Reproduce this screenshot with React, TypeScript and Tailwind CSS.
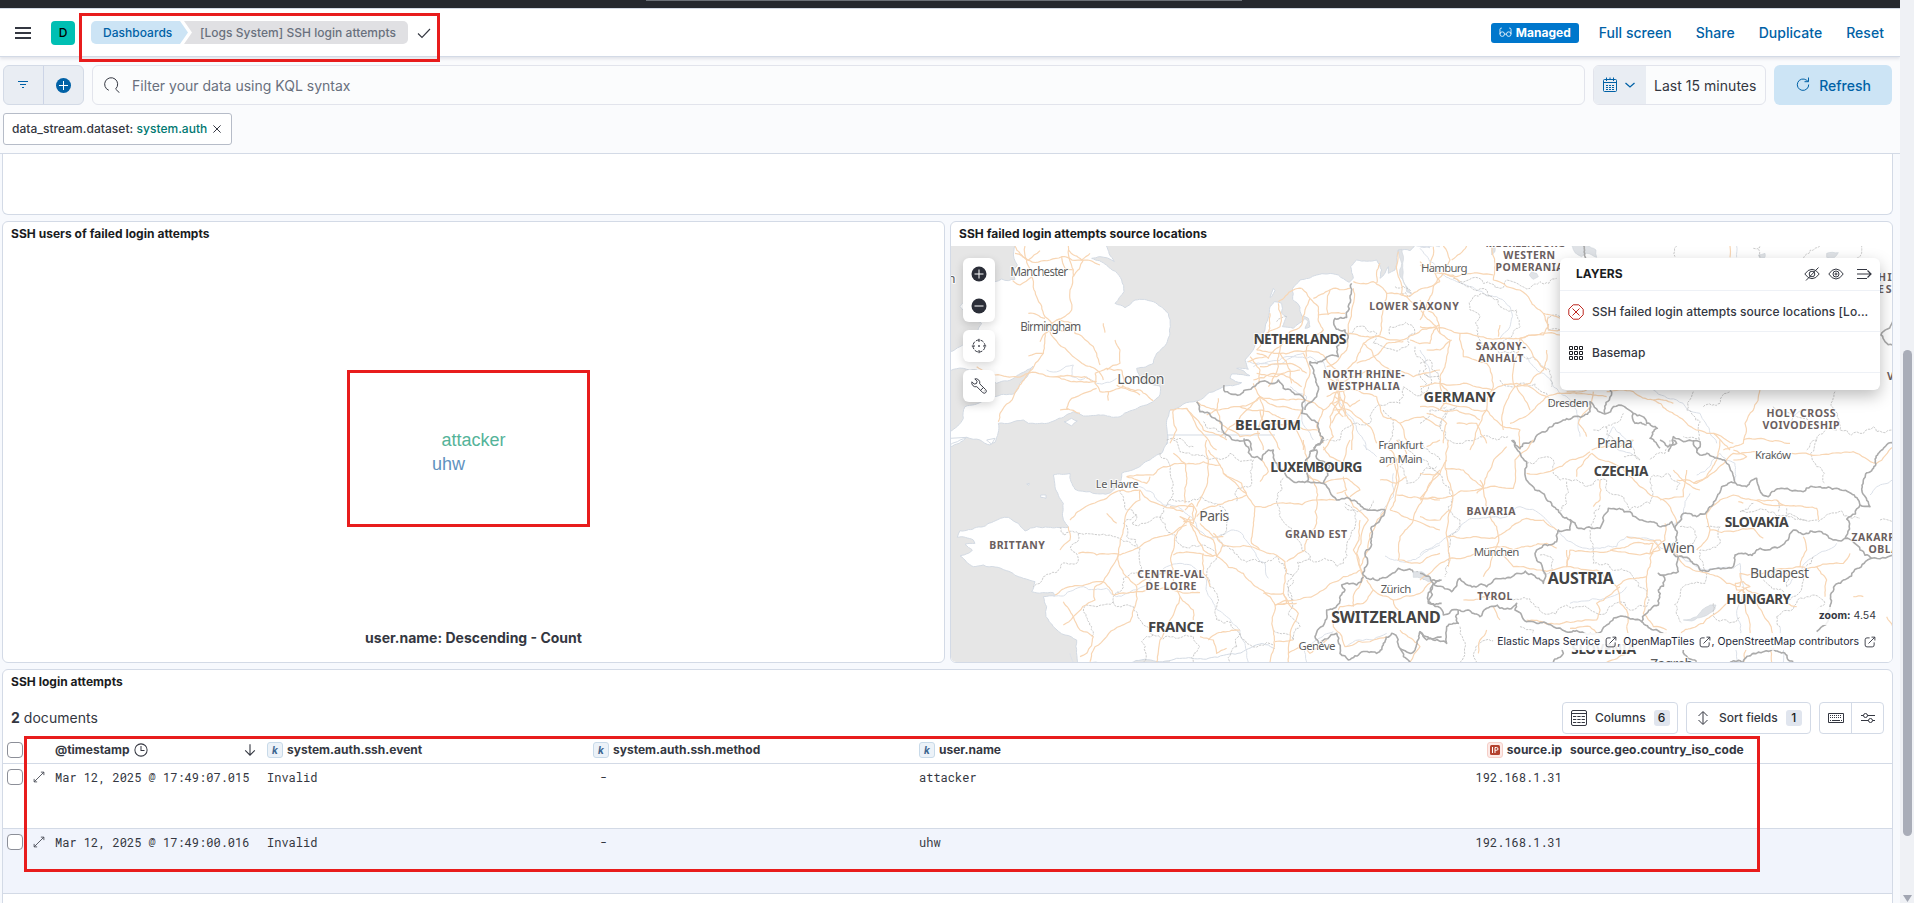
import React from "react";

const INTER = "font-['Inter',sans-serif]";
const MONO = "font-['Roboto_Mono','Liberation_Mono',monospace]";

/* ---------- map geometry ---------- */

type Pt = [number, number];

const parse = (s: string): Pt[] => s.split(" ").map((p) => p.split(",").map(Number) as Pt);

function noise(x: number, y: number) {
  const v = Math.sin(x * 12.9898 + y * 78.233) * 43758.5453;
  return (v - Math.floor(v)) * 2 - 1;
}

function rough(s: string, k: number, min = 12): string {
  const pts = parse(s);
  const out: Pt[] = [pts[0]];
  const split = (a: Pt, b: Pt) => {
    const dx = b[0] - a[0];
    const dy = b[1] - a[1];
    const len = Math.hypot(dx, dy);
    if (len < min) {
      out.push(b);
      return;
    }
    const n = noise(a[0] + b[0], a[1] + b[1]) * k;
    const m: Pt = [(a[0] + b[0]) / 2 - dy * n, (a[1] + b[1]) / 2 + dx * n];
    split(a, m);
    split(m, b);
  };
  for (let i = 1; i < pts.length; i++) split(pts[i - 1], pts[i]);
  return "M" + out.map((p) => p[0].toFixed(1) + " " + p[1].toFixed(1)).join("L");
}

type Sheet = { x: number; y: number; land?: string[]; water?: string[]; roads: string[]; rivers: string[]; regions: string[]; borders: string[] };

const SHEETS: Sheet[] = [
  {
    x: 940,
    y: 210,
    land: [
      "225,105 222,145 232,165 218,190 225,208 205,212 185,207 165,215 150,235 100,260 60,290 80,310 125,340 110,370 60,410 30,425 30,483 70,475 110,480 150,510 170,520 230,497 280,468 262,500 240,520 225,550 190,553 165,560 130,572 75,590 70,625 30,665 30,710 80,682 120,690 150,705 165,697 175,640 250,630 265,640 320,640 370,622 400,605 430,618 490,615 540,620 600,590 640,575 657,560 660,528 640,525 600,515 590,475 640,460 650,430 680,400 691,350 685,310 640,275 585,270 555,293 525,280 552,245 545,210 500,165 455,145 480,140 523,155 498,105",
      "372,635 395,625 412,633 395,648",
      "668,725 685,690 680,650 690,600 770,573 850,530 905,518 870,505 875,492 930,497 890,475 925,478 915,450 950,400 975,360 990,290 1003,275 1025,280 1025,310 1040,320 1027,350 1060,355 1095,325 1105,335 1095,355 1110,350 1105,325 1085,318 1080,292 1058,268 1058,235 1080,210 1130,195 1195,195 1228,217 1240,205 1232,170 1250,150 1310,150 1325,180 1320,205 1345,170 1345,190 1365,180 1375,120 1410,122 1425,106 1520,106 1520,725",
      "1000,235 1005,242 995,260 990,262",
    ],
    water: ["1375,120 1385,160 1380,200 1400,245 1412,250 1390,215 1388,160 1385,118"],
    roads: [
      "225,108 260,150 275,200 290,260 315,320 340,345", "385,108 400,180 390,240 395,300 350,330 315,360", "260,150 330,150 365,140 430,150 480,165",
      "265,150 300,122", "225,130 265,150", "365,140 375,175 400,180", "430,150 400,200", "255,108 260,150", "385,120 425,150 450,130", "330,365 390,430 470,480 490,510",
      "315,370 310,430 265,490 200,500 165,495", "310,430 265,438", "265,490 230,540 180,610 175,635", "265,490 350,500 470,515",
      "350,330 395,340 405,370 470,430 480,465", "490,340 495,368", "525,390 540,420 540,460 500,480", "465,490 500,475 545,480 548,530 510,545 480,545 465,520 465,490",
      "545,530 600,540 640,572", "505,545 505,572", "470,535 395,565 380,595 420,610", "530,525 600,555", "265,310 315,325", "275,200 240,225 218,212", "360,600 385,598",
      "300,395 315,370 340,360 375,365", "460,515 435,500 350,500", "110,470 135,490 165,495",
      "1015,275 1060,240 1085,235", "1085,235 1110,265 1135,290 1135,315 1150,360 1100,410", "1120,265 1180,235 1230,235", "1170,240 1165,315",
      "1135,315 1215,310", "1110,265 1095,300 1085,345", "1085,345 1050,365 1020,420", "1015,280 1020,350 980,370", "990,310 985,370 950,420",
      "950,420 1020,430 1090,425 1150,435", "930,440 960,480 955,520", "1020,420 1015,470 985,530", "960,470 1050,460 1100,490",
      "950,490 1010,500 1080,480", "1090,430 1110,480 1090,560", "1150,435 1190,480 1200,560 1215,620", "1020,430 1050,480 1055,520", "950,430 985,445 1030,400",
      "940,510 1000,490 1040,500 1085,530", "925,455 980,440", "1100,410 1100,440", "690,600 740,595 790,660 860,690", "770,575 830,600 900,590 960,560 1040,570 1095,570",
      "830,600 840,640 900,680 960,670", "960,560 955,680 970,720", "960,600 1000,680 1020,720", "900,590 960,600 1060,640 1090,720",
      "835,565 830,600 800,615", "960,560 920,600 870,650 840,680", "940,520 960,560 1010,590 1085,600", "1085,600 1060,640 1000,640 955,650",
      "1095,570 1150,600 1200,570", "1150,600 1130,650 1150,700", "700,600 710,660 690,700", "740,595 770,650 830,720", "1060,640 1100,660 1140,660",
      "1240,235 1235,300 1225,370 1220,420 1160,470", "1240,215 1300,215 1340,250 1400,260", "1375,125 1375,200 1385,250 1400,260 1500,215",
      "1340,250 1325,320 1320,375 1270,400 1250,450 1215,500", "1220,370 1320,380 1400,385 1500,345", "1400,260 1450,310 1490,350 1470,400 1410,390", "1270,400 1310,450 1350,480 1420,500 1500,480",
      "1150,500 1190,520 1200,590 1250,620", "1160,560 1200,545 1250,540 1310,560", "1190,520 1240,500 1290,480", "1180,600 1210,600 1240,650 1235,720", "1310,560 1330,620 1380,640 1420,720",
      "1200,560 1170,620 1180,680 1150,720", "1250,620 1290,650 1310,700", "1185,560 1230,590 1260,570", "1200,530 1215,560 1200,600 1175,640", "1190,545 1175,580 1210,620",
      "1250,460 1300,440 1340,400 1390,395", "1310,220 1320,160", "1440,270 1480,310 1500,370", "1480,110 1470,160 1500,215", "1380,640 1450,620 1500,650",
    ],
    rivers: ["320,480 360,482 400,465 395,500 420,510 440,500 470,520 530,505", "920,455 990,465 1050,445 1110,440 1150,455 1190,510 1200,580 1250,660 1280,720", "940,470 985,455 1050,440 1090,430", "1500,110 1440,110", "1050,530 1100,560 1085,610 1120,690"],
    regions: [
      "1220,375 1275,350 1310,370 1300,400 1340,415 1400,410 1425,370 1415,345 1380,345 1350,350 1350,375", "1425,410 1430,440 1455,460 1450,490 1475,510 1460,545 1390,530 1380,580 1300,600 1290,640 1230,650 1200,690 1150,690",
      "1365,230 1410,240 1410,260 1380,250", "1330,600 1360,650 1340,700", "1455,490 1500,500", "680,690 720,685 760,710", "790,635 840,665 860,690", "1040,320 1010,335",
    ],
    borders: [
      "1235,220 1232,270 1220,322 1185,325 1185,350 1215,360 1220,395 1190,410 1195,440 1150,450 1110,455 1120,490 1135,530 1130,560 1105,580 1095,600",
      "852,525 855,545 905,550 940,530 960,515 1015,510 1030,535 1055,545 1095,570 1085,610 1110,625 1135,640 1150,685 1120,715",
      "770,575 780,605 830,630 850,665 880,690 930,695 935,722",
    ],
  },
  {
    x: 1420,
    y: 210,
    water: ["455,106 465,128 485,140 500,130 530,142 528,120 500,106", "335,185 350,190 355,200 340,208 328,195", "1220,130 1255,128 1240,145 1220,142", "1015,135 1035,130 1035,142 1020,145", "215,106 225,110 225,125 215,135"],
    roads: [
      "0,165 60,190 110,200 180,190 220,195", "70,190 90,150 70,108", "95,150 140,108", "0,155 30,180 70,190", "70,190 40,230 20,290 0,330", "215,110 225,160 220,210 260,230 300,240 330,270 370,310 420,325",
      "70,190 120,215", "0,350 50,355 120,370 200,385 300,385 350,375 420,375", "370,310 385,350 370,375 300,385 290,440 285,530 250,600 250,660", "50,355 90,390 80,440 60,500 60,520 0,530",
      "60,520 140,520 220,540 290,520 350,545 380,560", "120,370 130,440 200,460 220,530 200,600 180,640 150,720", "60,520 70,580 130,590 200,600 250,650", "250,650 300,660 300,720",
      "0,590 60,600 110,600 180,630", "300,385 340,440 380,480", "285,530 330,520 370,480 380,420", "380,560 450,550 560,560", "380,560 340,600 270,640", "95,390 60,420 20,420",
      "240,345 235,380", "385,320 385,360 420,360", "520,545 510,590 475,640 500,680", "560,545 640,545 700,570 760,580", "700,570 740,600 800,640 860,670 940,700", "1020,540 1000,600 975,640 970,700 910,720",
      "970,690 1040,690 1110,700", "930,108 930,142", "880,670 910,700 930,720", "440,545 500,540", "20,610 80,640 70,700", "110,640 170,640 200,700", "330,600 310,560 290,530", "60,600 90,560 60,520",
    ],
    rivers: ["0,115 60,190 110,215 170,240 230,260 270,290 270,350 240,385", "320,440 370,490 400,530 440,560 470,600 480,680", "700,540 770,570 840,610 870,670 890,700", "950,108 950,142", "540,710 580,650 620,690", "1150,600 1110,640", "0,420 30,500"],
    regions: [
      "0,460 30,450 55,490 60,520", "100,205 140,230 215,260 240,290 290,300 300,350 265,385 240,410 200,415 170,360 180,320 150,300 160,260 215,260", "120,215 190,220 240,235 260,210 330,235 360,215 410,205",
      "60,650 75,600 110,590 60,650 80,690 120,700 180,680 230,690 265,680", "770,108 765,140", "1000,115 1020,110 1020,142", "1150,145 1200,108", "1310,145 1325,108", "200,415 240,430 300,440 340,440 390,480 395,530", "240,510 300,520 380,550 390,590",
      "820,545 800,600 840,690 790,680", "1060,590 1110,610 1200,640 1250,660", "1245,545 1240,600 1260,660 1330,670 1360,650 1418,660", "0,640 30,600 80,590", "380,330 420,320 420,360 385,360 380,330", "1250,660 1190,690 1160,720", "850,590 900,580 930,545",
      "560,650 580,690 640,690", "0,480 20,520 0,560", "520,660 580,640 610,610",
    ],
    borders: [
      "275,690 300,715 310,700 360,670 430,630 510,605 510,575 555,612 580,590 640,610 680,640 712,655 690,685 720,715", "570,540 568,570 555,612", "745,725 760,680 790,695 840,695 830,722", "1418,335 1383,375 1395,395 1418,405", "490,106 497,145", "640,610 645,640 680,645",
    ],
  },
  {
    x: 940,
    y: 440,
    land: [
      "30,-5 30,15 60,0 80,-8", "140,0 155,12 165,-5",
      "683,-15 683,10 665,40 610,70 545,100 540,130 512,158 450,155 405,148 393,125 390,100 365,103 340,105 345,140 370,190 370,240 385,262 350,262 325,262 290,260 255,273 235,250 205,232 160,245 110,262 60,272 52,292 100,300 105,310 75,313 97,330 85,340 60,348 100,380 130,375 200,392 250,415 285,425 275,455 340,458 345,468 310,470 320,500 318,530 340,560 375,585 410,600 415,675 1520,675 1520,-15",
      "302,165 318,165 318,175 302,172", "260,132 268,130 266,136",
    ],
    roads: [
      "700,40 735,70 740,130 735,190", "800,0 805,70 790,160 770,200", "560,110 640,105 670,80 740,72 840,75 850,100 920,160", "805,30 840,75", "545,150 600,150 650,190 730,215", "560,110 620,130 630,110",
      "390,240 430,205 500,175 550,150", "600,150 600,180 565,210 545,290 535,345 490,425", "500,220 530,250", "385,260 390,300 360,330", "415,340 470,345 540,345 600,320 660,290 740,255", "535,345 550,400 580,430",
      "750,230 705,290 700,420 720,470 690,540 660,600 650,667", "750,250 820,300 830,350 910,400 990,470 1005,495 1000,570 990,667", "770,230 810,200 860,185 920,165 945,200 935,310 960,330 1035,365 1040,390 1030,460 1075,520 1050,600 1045,667",
      "945,200 1040,190 1130,180 1190,180", "920,165 905,130 850,100", "1130,180 1130,250 1100,300 1095,330 1040,365", "1130,180 1120,120 1100,100 1095,40 1090,0", "1215,155 1240,200 1285,240 1265,280 1250,340 1260,380", "1260,390 1210,410 1150,450 1070,480 1005,495",
      "700,345 780,340 830,345", "830,350 850,315 930,320 960,330", "345,465 390,440 450,430 490,425 520,465 600,455 720,455 780,458", "490,425 465,440 465,480 400,530 370,555", "370,485 400,530 420,570 460,590 440,640 420,650",
      "580,430 590,440 580,510 570,545 500,590 465,620 450,665", "590,435 640,410 700,390", "720,470 760,510 760,540", "780,590 820,600 830,640 860,625", "805,600 850,575 900,570", "690,200 760,200 760,240 720,230 740,250", "735,210 755,190 770,215 760,250 730,245",
      "1100,110 1150,130 1220,115 1260,150 1230,170", "1210,110 1220,150 1190,160", "1005,495 1070,490", "1005,605 1060,600", "1045,640 1090,620 1110,640 1160,600", "970,460 1030,460 1040,490 1005,495", "960,125 985,95 965,60",
      "1360,60 1370,130 1340,200 1290,280 1260,380 1270,410 1240,500", "1150,20 1170,50 1210,70 1230,0", "1340,20 1370,60 1370,150 1350,210", "1370,165 1440,175 1500,180", "1350,210 1420,240 1500,270", "1420,240 1380,290 1375,360 1440,370 1500,340", "1440,175 1480,110 1500,90", "1420,240 1450,170 1500,100",
      "1280,420 1300,450 1360,480 1440,460 1480,420", "1300,450 1270,490 1200,500 1180,560 1200,580", "1200,580 1215,620 1300,600 1340,590", "1360,480 1380,520 1340,540", "1380,570 1420,600 1440,620 1410,667", "1260,240 1240,330 1270,400", "780,250 820,290 850,290",
      "820,350 790,330 760,270 750,240", "850,315 830,290 820,280", "790,340 790,400 810,440", "1370,0 1400,40 1370,60 1340,80", "1320,120 1370,130 1400,110",
    ],
    rivers: ["545,135 600,140 640,160 670,195 720,205 760,240 800,290 830,290 880,270 905,280 940,330 975,370 985,415", "340,468 370,468 430,440 500,445 530,470 580,450 620,435 680,380 720,370 770,390 800,420 820,490 860,530 900,570 915,610 925,667", "1360,100 1360,170 1320,240", "1500,315 1440,350 1380,365 1335,348", "1270,15 1310,50", "1100,667 1095,620 1130,600 1180,575", "1220,620 1300,600 1340,580", "390,640 400,667"],
    regions: [
      "700,0 720,35 790,45 870,40 940,60", "660,40 690,90 690,180 740,185 830,190 860,220 860,270 840,290", "690,180 670,205 675,250 710,290 715,310 770,320 820,330 830,350 810,380 810,440 825,510 830,540 900,580 890,620", "940,60 935,130 885,160 890,185", "540,150 560,210 590,225 575,250 615,250 640,235 670,235", "360,262 370,285 415,280 480,285 520,290 545,300 600,325 605,380 590,400",
      "415,280 410,370 355,390 310,410 300,430 280,440", "590,225 550,250 560,290 600,325", "605,400 550,415 545,450 520,470 530,500 580,500 600,540 640,585 700,590 760,590 780,620 760,667", "640,585 605,605 610,667", "520,485 440,495 430,510 455,560 455,590", "1030,115 1010,180 1020,230 1060,280 1085,330 1110,360 1190,380 1210,370 1220,320 1245,260 1240,210 1215,190",
      "830,290 880,330 905,360 960,365 1010,350 1040,400 1060,405 1110,350", "1060,405 1055,480 1045,520 1080,560 1060,600 1000,570", "900,580 920,610 1000,615", "1215,200 1290,205 1300,180", "1375,0 1440,60 1380,80 1400,130 1440,110 1490,80", "890,620 870,667", "1060,480 1045,450 1060,420", "1500,60 1450,20 1440,0",
    ],
    borders: [
      "912,-5 935,50 965,60 985,30 1000,30 1003,60 1035,100 1060,125 1105,125 1150,130 1190,180 1250,185 1335,210 1295,260 1275,340 1268,400 1280,415 1350,405 1375,385 1440,400 1505,420", "1150,0 1110,35 1095,70 1100,125", "1110,35 1130,30 1130,55 1170,80 1150,130",
      "1270,410 1250,435 1205,435 1215,450 1160,510 1155,545 1125,590 1135,610 1190,580 1200,640 1225,660 1310,640 1330,610 1355,580 1380,625 1410,640 1440,575 1460,600 1505,590", "1500,420 1475,440 1465,485 1505,490", "1380,625 1410,667",
    ],
  },
  {
    x: 1420,
    y: 440,
    water: ["790,540 830,530 870,495 888,495 885,508 850,530 815,543", "-20,395 5,395 35,420 25,425 -20,412"],
    roads: [
      "85,0 75,80 90,130 95,200 80,290 90,360 85,380", "75,85 130,90 190,145 200,210 230,260 230,320", "190,145 280,145 285,60 320,30 340,0", "0,180 60,175 190,145 210,90 260,20", "80,290 160,290 225,295 320,235 370,240 410,270", "230,320 330,320 380,310 410,325",
      "230,320 140,350 90,355 30,400 0,420", "230,320 210,380 190,410", "230,330 280,380 360,390 440,380 450,330 520,335 600,325 700,310", "320,100 400,90 450,60 510,35", "515,40 545,60 620,100 660,140 730,180 770,250", "515,40 470,90 470,110", "540,120 540,180 520,200",
      "515,30 600,20 640,0", "720,180 790,170 800,90", "735,250 735,300 700,330 690,380 680,440 670,520 700,560 740,570", "620,290 680,300 720,300 770,340 800,380 880,405 920,430 960,440", "700,340 660,345 570,330", "440,330 440,380 530,390 590,440 680,410", "590,440 600,490 620,510 620,560",
      "830,330 870,270 860,220 900,180 940,165 1000,180 1090,195 1190,205 1195,240", "770,120 830,130 890,90 940,40 1010,35", "1115,40 1200,45 1300,35 1370,70 1420,20", "940,30 980,50 940,60", "820,130 860,110 890,60 900,0", "870,270 940,275 1000,265 1030,295", "960,440 960,400 1050,390 1140,380 1190,380 1220,420 1215,470",
      "1140,380 1160,330 1150,290", "1190,380 1270,370 1290,340", "965,450 1010,490 1040,540 1060,600 1055,667", "965,450 900,510 850,550 750,600", "965,440 1010,460 1070,490 1130,500", "970,450 990,560 970,667", "320,540 440,545 530,540 540,510 530,490 600,440", "200,570 180,600 175,640", "620,560 620,640 560,667",
      "0,100 60,100 80,60", "20,20 60,0", "1400,530 1418,560", "700,300 720,330 690,340 700,310", "945,430 950,450 990,440 970,425 945,430", "130,480 190,470 280,480", "450,565 510,560 620,630 740,580", "1300,470 1330,470", "1090,195 1070,180 1010,180", "955,185 970,190", "220,500 240,540",
      "760,90 800,130 840,150", "180,120 190,145 170,160", "0,230 60,240 90,210",
    ],
    rivers: ["0,345 40,320 80,290 130,250 240,235 300,200 370,230 410,270 460,310 540,325 590,320 620,290 700,300 780,350 850,390 940,385 960,370 970,460 950,520 955,667", "450,490 540,480 620,440", "1350,165 1370,140 1418,120", "1100,440 1140,400 1180,350 1250,310", "560,10 640,45", "760,260 810,160", "830,105 900,40 945,70 945,120", "1080,560 1090,667"],
    regions: [
      "0,60 40,90 90,150 85,200 120,240 110,270 80,290", "85,290 85,360 75,410", "450,120 540,120 560,120 570,160 630,210 690,190 700,105 750,105", "440,125 440,190 420,215", "320,70 380,50 400,60 400,100 450,120", "750,105 780,130 770,150", "510,270 520,370 590,390 640,410 680,460 680,500", "280,480 340,490 480,500 530,520 640,510 680,500",
      "780,260 810,260 830,290 800,330", "860,260 900,260 900,310 840,330 850,380 855,430 790,440 785,550", "1000,190 960,215 1000,215 1060,215 1110,220 1150,240 1210,235 1320,235", "1100,205 1100,230 1160,240", "880,490 890,540 960,530", "1070,530 1130,490 1160,470 1215,490 1190,510", "1190,0 1190,80 1215,130", "1030,420 1100,480 1180,350", "540,195 520,240 515,270",
      "360,345 400,360 400,390 370,400", "240,580 180,610 170,667", "120,560 130,600 120,667", "300,560 340,570 360,610", "640,0 660,60 610,50", "1380,240 1418,245", "1070,180 1075,215", "750,0 735,40 690,60", "1100,440 1100,400 1040,410", "1070,530 1080,560",
    ],
    borders: [
      "0,400 40,430 25,490 70,525 115,510 180,530 210,500 290,490 285,510 320,545 400,560 480,577 530,580 560,555 665,545 680,520 715,495 715,450 735,420 715,400 775,395 775,350",
      "40,430 95,455 120,415 200,440 250,415 290,400 340,405 370,430 375,400 345,340 410,305 415,270 450,270 450,240 415,210 345,150 315,95 320,65 285,20 280,0",
      "450,238 475,265 540,265 565,205 630,215 680,245 755,245 765,265 770,300 755,330 775,350", "765,265 785,225 830,230 870,200 905,140 945,128 920,70 880,50 840,45 820,0",
      "945,128 980,140 1010,115 1045,170 1085,145 1150,155 1200,140 1250,145 1320,195 1350,200 1330,120 1420,10", "775,350 840,390 940,380 945,345 1020,325 1080,320 1120,270 1190,275 1240,300 1275,295 1320,195",
      "1275,295 1320,330 1355,355 1270,420 1230,500 1190,575", "1355,355 1420,345", "115,510 115,550 80,560 80,610 40,600 0,575", "665,545 700,570 730,580", "790,630 830,665", "930,667 1000,640 1060,625 1120,665", "400,667 430,640 425,625", "720,0 745,20 770,10 760,0",
    ],
  },
];

type Label = [string, number, number, number, number, "city" | "country" | "region"];

const LABELS: Label[] = [
  ["Manchester", 1039.3, 275.6, 58, 12, "city"], ["n", 951.5, 282.7, 7, 13, "city"], ["Birmingham", 1050.7, 330.8, 61, 12, "city"], ["London", 1140.8, 383.7, 47, 14, "city"],
  ["NETHERLANDS", 1300, 343.8, 93, 14, "country"], ["LOWER SAXONY", 1414, 310.3, 89.5, 10.5, "region"], ["NORTH RHINE-", 1363.7, 377.7, 82, 10.5, "region"], ["WESTPHALIA", 1363.8, 390, 72, 10.5, "region"],
  ["BELGIUM", 1268, 429.5, 66, 14.5, "country"], ["Frankfurt", 1400.8, 449.2, 45, 11.5, "city"], ["am Main", 1400.8, 462.6, 43.5, 11.5, "city"], ["Hamburg", 1444.3, 272, 46.7, 11.5, "city"],
  ["MECKLENBURG-", 1527, 246.8, 83, 10.5, "region"], ["WESTERN", 1529.2, 258.7, 51.7, 10.5, "region"], ["POMERANIA", 1529.5, 270.8, 68, 10.5, "region"], ["GERMANY", 1459.5, 402.2, 72, 14.5, "country"],
  ["SAXONY-", 1500.8, 349.8, 50, 10.5, "region"], ["ANHALT", 1500.8, 361.8, 45, 10.5, "region"], ["Dresden", 1568, 407.3, 41, 11.5, "city"], ["Praha", 1614.8, 447.5, 35.7, 14, "city"],
  ["HOLY CROSS", 1801, 416.7, 69, 10.5, "region"], ["VOIVODESHIP", 1801, 428.7, 77, 10.5, "region"], ["HIAN", 1894, 281, 32, 10.5, "region"], ["ESHIP", 1897, 293, 38, 10.5, "region"], ["VO", 1896, 380, 18, 10.5, "region"],
  ["Le Havre", 1117.3, 487.5, 43, 11, "city"], ["LUXEMBOURG", 1316.3, 472, 92, 14, "country"], ["Paris", 1214.3, 520.7, 30, 14, "city"], ["BRITTANY", 1017, 549, 55.7, 10.5, "region"],
  ["GRAND EST", 1316, 538, 62, 10.5, "region"], ["CENTRE-VAL", 1170.8, 578.3, 67, 10.5, "region"], ["DE LOIRE", 1171, 590.3, 51, 10.5, "region"], ["FRANCE", 1176, 632, 56, 15, "country"],
  ["Zürich", 1396, 593, 30.7, 11.5, "city"], ["SWITZERLAND", 1386, 623, 109.5, 16, "country"], ["Genève", 1317, 650, 37, 11.5, "city"], ["CZECHIA", 1621, 475.8, 54.7, 13.5, "country"],
  ["Kraków", 1773, 458.5, 36, 11.5, "city"], ["BAVARIA", 1491, 514.8, 49, 10.5, "region"], ["SLOVAKIA", 1756.8, 526.7, 64, 14, "country"], ["ZAKARPATTIA", 1889, 541.3, 75, 10.5, "region"], ["OBLAST", 1890, 553.3, 43, 10.5, "region"],
  ["Wien", 1678.8, 553, 32, 14, "city"], ["München", 1496.5, 555.8, 45.7, 11.5, "city"], ["AUSTRIA", 1580.8, 584.2, 66, 16, "country"], ["Budapest", 1779.5, 577.8, 59, 14, "city"], ["HUNGARY", 1758.7, 603.5, 64.7, 13.5, "country"],
  ["TYROL", 1494.8, 600, 35, 10.5, "region"], ["SLOVENIA", 1603.7, 654.3, 64.7, 13.5, "country"], ["Zagreb", 1671.7, 669, 43, 14, "city"],
];

const LABEL_STYLE = { city: "fill-[#5c5c5c] font-normal", country: "fill-[#444] font-bold", region: "fill-[#6b6060] font-bold" };

function MapCanvas() {
  const at = (s: Sheet) => `translate(${s.x} ${s.y}) scale(.33333)`;
  return (
    <svg className="block h-full w-full" viewBox="951 246 941 416" preserveAspectRatio="xMinYMin slice" fill="none" strokeLinejoin="round">
      <rect x="951" y="246" width="941" height="416" fill="#fff" />
      <path d="M951 246H1420V450H1170V662H951Z" fill="#e6e6e6" />
      {SHEETS.map((s, i) => (
        <g key={i} transform={at(s)}>
          {s.land?.map((d, j) => <path key={j} d={rough(d, 0.09) + "Z"} fill="#fff" stroke="#d3dae3" strokeWidth="3" />)}
        </g>
      ))}
      <rect x="1275" y="420" width="620" height="245" fill="#fff" />
      <rect x="1430" y="246" width="465" height="200" fill="#fff" />
      <path d="M1170 438H1280V455H1170Z" fill="#fff" />
      {SHEETS.map((s, i) => (
        <g key={i} transform={at(s)}>
          {s.water?.map((d, j) => <path key={j} d={rough(d, 0.09) + "Z"} fill="#e0e3e7" stroke="#d0d6dd" strokeWidth="2" />)}
          {s.rivers.map((d, j) => <path key={j} d={rough(d, 0.13)} stroke="#dce1e9" strokeWidth="3" />)}
          {s.regions.map((d, j) => <path key={j} d={rough(d, 0.24)} stroke="#bfbfbf" strokeWidth="2.4" strokeDasharray="7 3" />)}
          {s.roads.map((d, j) => <path key={j} d={rough(d, 0.1)} stroke="#f8d6b4" strokeWidth="3.6" />)}
          {s.borders.map((d, j) => <path key={j} d={rough(d, 0.2, 9)} stroke="#ababab" strokeWidth="4.800" />)}
        </g>
      ))}
      {LABELS.map(([t, x, y, w, size, kind]) => (
        <text key={t} x={x} y={y} textAnchor="middle" textLength={w} fontSize={size} className={`font-['Noto_Sans',sans-serif] stroke-white/80 stroke-2 [paint-order:stroke] ${LABEL_STYLE[kind]}`}>
          {t}
        </text>
      ))}
    </svg>
  );
}

/* ---------- icons ---------- */

function Icon({ children, size = 16, className = "" }: { children: React.ReactNode; size?: number; className?: string }) {
  return (
    <svg width={size} height={size} viewBox="0 0 16 16" fill="none" stroke="currentColor" strokeWidth="1" className={`shrink-0 ${className}`}>
      {children}
    </svg>
  );
}

const External = () => (
  <Icon size={12} className="text-[#343741]">
    <path d="M7.5 2.5H4Q1.500 2.500 1.500 5V12Q1.500 14.500 4 14.500H11Q13.500 14.500 13.500 12V8.500M10 1.500H14.500V6M14.300 1.700L6 10" strokeWidth="1.200" />
  </Icon>
);

function Token({ ip = false }: { ip?: boolean }) {
  return ip ? (
    <span className="flex size-4 shrink-0 items-center justify-center rounded-[3px] border border-[#f6cfc8] bg-[#fdeae7]">
      <svg width="10" height="10" viewBox="0 0 10 10">
        <rect width="10" height="10" rx="1.500" fill="#b4422f" />
        <path d="M2.500 2V8M5 8V2.500H6.500Q8 2.500 8 4Q8 5.300 6.500 5.300H5" fill="none" stroke="#fff" />
      </svg>
    </span>
  ) : (
    <span className="flex size-4 shrink-0 items-center justify-center rounded-[3px] border border-[#c8dae9] bg-[#ecf2f8] text-[10px] leading-none font-bold text-[#3d6690] italic">k</span>
  );
}

const Checkbox = () => <span className="block size-4 shrink-0 rounded-[4px] border border-[#8c8f98] bg-white" />;

const Expand = () => (
  <Icon size={12} className="text-[#4a4d57]">
    <path d="M10.500 1.500H14.500V5.500M14.500 1.500L1.500 14.500M1.500 10.500V14.500H5.500" strokeWidth="1.200" />
  </Icon>
);

/* ---------- page pieces ---------- */

function Header() {
  return (
    <header className="relative z-10 flex h-[48px] shrink-0 items-center border-b border-[#d3dae6] bg-white pr-4 pl-[15px] shadow-[0_2px_3px_rgba(60,70,100,.13)]">
      <svg width="16" height="12" viewBox="0 0 16 12" fill="#343741">
        <path d="M0 0H16V2H0ZM0 5H16V7H0ZM0 10H16V12H0Z" />
      </svg>
      <span className="ml-5 flex size-6 items-center justify-center rounded-[4px] bg-[#00bfb3] text-[12px] font-medium text-black">D</span>
      <nav className="ml-4 flex h-[23px] items-center text-[12px] font-medium tracking-[0.03px]">
        <span className="flex h-full w-[97px] items-center rounded-l-[5px] bg-[#cce4f5] pl-3 text-[#0061a6] [clip-path:polygon(0_0,89px_0,97px_50%,89px_100%,0_100%)]">Dashboards</span>
        <span className="-ml-1 flex h-full w-[224px] items-center rounded-r-[5px] bg-[#e0e0e3] pl-4 whitespace-nowrap text-[#69707d] [clip-path:polygon(0_0,100%_0,100%_100%,0_100%,8px_50%)]">[Logs System] SSH login attempts</span>
      </nav>
      <Icon className="ml-2 text-[#343741]">
        <path d="M2 8.500L6 12.500L14 4" strokeWidth="1.100" />
      </Icon>
      <div className="ml-auto flex items-center gap-6 text-[14px] font-[450] tracking-[0.03px] text-[#0061a6]">
        <span className="-mr-1 flex h-5 w-[88px] items-center justify-center gap-1 rounded-[3px] bg-[#0077cc] text-[12px] font-bold text-white">
          <Icon size={13}>
            <circle cx="4" cy="10" r="2.800" />
            <circle cx="12" cy="10" r="2.800" />
            <path d="M6.800 10H9.200M1.200 10V4Q1.200 2.500 3.500 2.500M14.800 10V4Q14.800 2.500 12.500 2.500" />
          </Icon>
          Managed
        </span>
        <span>Full screen</span>
        <span>Share</span>
        <span>Duplicate</span>
        <span>Reset</span>
      </div>
    </header>
  );
}

function QueryBar() {
  return (
    <section className="flex h-[97px] shrink-0 flex-col border-b border-[#d3dae6] bg-[#fafbfd] pt-2 pr-2 pl-[3px]">
      <div className="flex h-10 gap-2 text-[14px]">
        <div className="flex w-[81px] overflow-hidden rounded-md border border-[#d3dae6] bg-[#e9edf3] text-[#0061a6]">
          <span className="flex w-[40px] items-center justify-center border-r border-[#ccd4e6] pr-[2px]">
            <svg width="10" height="8" viewBox="0 0 10 8" stroke="currentColor">
              <path d="M0 .5H10M2 3.500H8M4 6.500H6" />
            </svg>
          </span>
          <span className="flex flex-1 items-center justify-center">
            <svg width="15" height="15" viewBox="0 0 15 15">
              <circle cx="7.500" cy="7.500" r="7.500" fill="currentColor" />
              <path d="M7.500 3V12M3 7.500H12" stroke="#fff" />
            </svg>
          </span>
        </div>
        <div className="flex flex-1 items-center rounded-md border border-[#e2e4ec] bg-[#fbfcfd] pl-[11px] text-[#69707d]">
          <Icon className="text-[#343741]">
            <path d="M4.800 13.300A6.500 6.500 0 1 1 11.800 11.800M11.500 12L15.500 15.800" />
          </Icon>
          <span className="ml-3">Filter your data using KQL syntax</span>
        </div>
        <div className="flex w-[173px] overflow-hidden rounded-md border border-[#e2e4ec] bg-[#fbfcfd]">
          <span className="flex w-[52px] items-center gap-[4px] bg-[#e9edf3] pl-2 text-[#0061a6]">
            <Icon>
              <rect x="1.500" y="2.500" width="13" height="12" rx="1" />
              <path d="M1.500 5.500H14.500M4.500 .5V4M11.500 .5V4M8 .5V3" />
              <path d="M4 8.500H12M4 10.500H12M4 12.500H12" strokeDasharray="2 1" />
            </Icon>
            <Icon>
              <path d="M3.500 6L8 10L12.500 6" strokeWidth="1.300" />
            </Icon>
          </span>
          <span className="flex flex-1 items-center pl-2 tracking-[0.03px] whitespace-nowrap text-[#343741]">Last 15 minutes</span>
        </div>
        <div className="flex w-[118px] items-center justify-center gap-2 rounded-md bg-[#cce4f5] font-medium text-[#0061a6]">
          <Icon className="mb-[2px]">
            <path d="M13.700 8.500A5.700 5.700 0 1 1 11.500 4.200L13.200 5.500M13.500 1.500V5.700H9.500" />
          </Icon>
          <span>Refresh</span>
        </div>
      </div>
      <div className="mt-2 flex h-8 w-[229px] items-center rounded-[3px] border border-[#b6bcc8] bg-white pl-2 text-[12px] font-[450] tracking-[0.04px] text-[#343741]">
        data_stream.dataset:&nbsp;<span className="text-[#007871]">system.auth</span>
        <svg width="8" height="8" viewBox="0 0 8 8" stroke="#343741" className="ml-[6px]">
          <path d="M.4 .4L7.600 7.600M7.600 .4L.4 7.600" />
        </svg>
      </div>
    </section>
  );
}

function UsersPanel() {
  return (
    <section className="relative flex w-[943px] flex-col rounded-md border border-[#d3dae6] bg-white">
      <h2 className="h-6 pl-2 text-[12px] leading-[23px] font-bold tracking-[0.03px] text-[#1a1c21]">SSH users of failed login attempts</h2>
      <div className="flex-1">
        <svg width="941" height="380" viewBox="3 246 941 380" className="block font-['Liberation_Sans',sans-serif] text-[18px]">
          <text x="441.500" y="446" fill="#54b399">attacker</text>
          <text x="432" y="470" fill="#6092c0">uhw</text>
        </svg>
      </div>
      <p className="flex h-[35px] items-start justify-center text-[14px] leading-[22px] font-bold text-[#343741]">user.name: Descending - Count</p>
      <div className="absolute top-[148px] left-[344px] h-[157px] w-[243px] border-[3px] border-[#e81c1c]" />
    </section>
  );
}

const mapCard = "flex w-8 flex-col items-center rounded-md bg-white shadow-[0_3px_8px_rgba(0,0,0,.16)]";

function MapPanel() {
  return (
    <section className="flex w-[943px] flex-col overflow-hidden rounded-md border border-[#d3dae6] bg-white">
      <h2 className="h-6 shrink-0 pl-2 text-[12px] leading-[23px] font-bold tracking-[0.03px] text-[#1a1c21]">SSH failed login attempts source locations</h2>
      <div className="relative h-[416px]">
        <MapCanvas />
        <div className="absolute top-3 left-3 flex flex-col gap-2 text-[#343741]">
          <div className={`${mapCard} h-16 justify-around`}>
            <svg width="16" height="16" viewBox="0 0 16 16">
              <circle cx="8" cy="8" r="7.500" fill="#2b2e38" />
              <path d="M8 3.500V12.500M3.500 8H12.500" stroke="#fff" />
            </svg>
            <svg width="16" height="16" viewBox="0 0 16 16">
              <circle cx="8" cy="8" r="7.500" fill="#2b2e38" />
              <path d="M3.500 8H12.500" stroke="#fff" />
            </svg>
          </div>
          <div className={`${mapCard} h-8 justify-center`}>
            <Icon>
              <circle cx="8" cy="8" r="6" strokeDasharray="3.400 1.300" strokeDashoffset="-1" />
              <path d="M8 .8V4M8 12V15.200M.8 8H4M12 8H15.200" />
              <circle cx="8" cy="8" r=".5" fill="currentColor" />
            </Icon>
          </div>
          <div className={`${mapCard} h-8 justify-center`}>
            <Icon>
              <path d="M3.800 .9A4 4 0 0 1 8.700 5.800L14.700 11.700A2 2 0 0 1 11.800 14.600L5.800 8.700A4 4 0 0 1 .9 3.800L3.200 6.100L5.500 5.500L6.100 3.200ZM9.700 12.200L12.300 9.700M12.900 12.900H13.400" strokeWidth=".95" />
            </Icon>
          </div>
        </div>
        <div className="absolute top-3 right-3 h-[132px] w-[320px] rounded-md bg-white text-[12px] text-[#343741] shadow-[0_6px_16px_rgba(0,0,0,.26)]">
          <div className="flex h-[33px] items-center border-b border-[#eef1f6] pr-2 pl-4">
            <span className="flex-1 font-bold text-[#1a1c21]">LAYERS</span>
            <Icon>
              <path d="M.8 8Q4 3.300 8 3.300T15.200 8Q12 12.700 8 12.700T.8 8ZM2 14.500L14.500 1.500" />
              <circle cx="8" cy="8" r="2.800" />
            </Icon>
            <Icon className="ml-2">
              <path d="M.8 8Q4 3 8 3T15.200 8Q12 13 8 13T.8 8Z" />
              <circle cx="8" cy="8" r="3" />
              <circle cx="8" cy="8" r="1" />
            </Icon>
            <Icon className="ml-3">
              <path d="M1 3.500H11M1 8H14.500M1 12.500H11M11.500 4.500L15 8L11.500 11.500" strokeWidth="1.200" />
            </Icon>
          </div>
          <div className="flex h-[41px] items-center gap-2 border-b border-[#eef1f6] pt-px pl-2">
            <Icon className="text-[#bd271e]">
              <path d="M5.200 .8H10.800L15.200 5.200V10.800L10.800 15.200H5.200L.8 10.800V5.200ZM4.500 4.500L11.500 11.500M11.500 4.500L4.500 11.500" />
            </Icon>
            <span className="pt-px font-[450] tracking-[0.04px] whitespace-nowrap">SSH failed login attempts source locations [Lo...</span>
          </div>
          <div className="flex h-[41px] items-center gap-2 border-b border-[#eef1f6] pt-px pl-2">
            <Icon className="text-[#1a1c21]">
              <path d="M1.500 1.500h3v3h-3zM6.500 1.500h3v3h-3zM11.500 1.500h3v3h-3zM1.500 6.500h3v3h-3zM6.500 6.500h3v3h-3zM11.500 6.500h3v3h-3zM1.500 11.500h3v3h-3zM6.500 11.500h3v3h-3zM11.500 11.500h3v3h-3z" />
            </Icon>
            <span className="pt-px font-[450] tracking-[0.04px]">Basemap</span>
          </div>
        </div>
        <div className="absolute right-3 bottom-[12px] flex flex-col items-end text-[10.5px] text-[#343741]">
          <div className="mb-2 flex h-[18px] items-center bg-white/85 px-1">
            <b className="font-bold">zoom:</b>&nbsp;4.54
          </div>
          <div className="flex h-[17px] items-center bg-white/90 px-1 text-[#1f2a3a]">
            Elastic Maps Service<span className="w-[5px]" />
            <External />, OpenMapTiles<span className="w-[5px]" />
            <External />, OpenStreetMap contributors<span className="w-[5px]" />
            <External />
          </div>
        </div>
      </div>
    </section>
  );
}

const ROWS = [
  { time: "Mar 12, 2025 @ 17:49:07.015", user: "attacker", bg: "bg-white" },
  { time: "Mar 12, 2025 @ 17:49:00.016", user: "uhw", bg: "bg-[#f1f4fc]" },
];

const GRID = "grid grid-cols-[17px_25px_212px_326px_326px_326px_329px_1fr] pl-1";

function TablePanel() {
  const button = "flex h-8 items-center rounded-[4px] border border-[#d3dae6] bg-white";
  const count = "flex size-4 items-center justify-center rounded-[3px] bg-[#e0e5ee] text-[12px] font-medium text-[#1a1c21]";
  return (
    <section className="relative mr-[7px] ml-[2px] flex h-[240px] shrink-0 flex-col rounded-t-md border border-[#d3dae6] bg-white text-[#343741]">
      <h2 className="h-8 pl-2 text-[12px] leading-[24px] font-bold tracking-[0.03px] text-[#1a1c21]">SSH login attempts</h2>
      <div className="flex h-[36px] items-start pr-2 pl-2 text-[14px]">
        <p className="mt-[6px] flex-1 leading-5 tracking-[0.03px]">
          <b>2</b> documents
        </p>
        <div className="flex gap-2 text-[12px]">
          <span className={`${button} w-[116px] gap-2 pl-2`}>
            <Icon>
              <rect x=".5" y=".5" width="15" height="15" rx="1.500" />
              <path d="M.5 3.500H15.500" />
              <path d="M2 6.500H14M2 9.500H14M2 12.500H14" strokeDasharray="3.300 1" />
            </Icon>
            <span className="font-[450]">Columns</span>
            <span className={count}>6</span>
          </span>
          <span className={`${button} w-[125px] gap-2 pl-2`}>
            <Icon>
              <path d="M8 2V14M3.500 6L8 1.500L12.500 6M3.500 10L8 14.500L12.500 10" />
            </Icon>
            <span className="font-[450]">Sort fields</span>
            <span className={count}>1</span>
          </span>
          <span className={`${button} w-[65px]`}>
            <span className="flex h-full w-8 items-center justify-center border-r border-[#d3dae6]">
              <Icon>
                <path d="M.5 3.500H15.500V12.500H.5Z" />
                <path d="M2 5.500H14M2 7.500H14" strokeDasharray="1 1" />
                <path d="M2 10.500H3M4 10.500H12M13 10.500H14" />
              </Icon>
            </span>
            <span className="flex flex-1 items-center justify-center">
              <Icon>
                <path d="M1 5.500H3.500M7.500 5.500H15M1 10.500H8.500M12.500 10.500H15" />
                <circle cx="5.500" cy="5.500" r="2" />
                <circle cx="10.500" cy="10.500" r="2" />
              </Icon>
            </span>
          </span>
        </div>
      </div>
      <div className={`${GRID} h-[26px] border-b border-[#d3dae6] pb-[2px] text-[12px] font-bold *:flex *:items-center`}>
        <span><Checkbox /></span>
        <span />
        <span className="gap-1 pr-1 pl-[6px]">
          @timestamp
          <Icon size={14}>
            <circle cx="8" cy="8" r="7" strokeWidth="1.150" />
            <path d="M8 3.500V8.500H12" strokeWidth="1.150" />
          </Icon>
          <Icon size={14} className="ml-auto">
            <path d="M8 1.500V14M2.500 8.500L8 14L13.500 8.500" strokeWidth="1.250" />
          </Icon>
        </span>
        <span className="gap-1 pl-[6px]"><Token />system.auth.ssh.event</span>
        <span className="gap-1 pl-[6px]"><Token />system.auth.ssh.method</span>
        <span className="gap-1 pl-[6px]"><Token />user.name</span>
        <span className="justify-end gap-1 pr-[6px]"><Token ip />source.ip</span>
        <span className="pl-[2px]">source.geo.country_iso_code</span>
      </div>
      {ROWS.map((r) => (
        <div key={r.user} className={`${GRID} ${MONO} ${r.bg} h-[65px] shrink-0 border-b border-[#d3dae6] pt-[5px] text-[12px] leading-[17px] whitespace-pre`}>
          <span><Checkbox /></span>
          <span className="flex h-4 items-center pl-[9px]"><Expand /></span>
          <span className="pl-[6px]">{r.time}</span>
          <span className="pl-[6px]">Invalid</span>
          <span className="pl-[13px]">-</span>
          <span className="pl-[6px]">{r.user}</span>
          <span className="pr-[6px] text-right">192.168.1.31</span>
          <span />
        </div>
      ))}
      <div className="absolute top-[66px] left-[21px] h-[136px] w-[1736px] border-[3px] border-[#e81c1c]" />
    </section>
  );
}

export default function App() {
  return (
    <div className={`${INTER} flex h-[903px] w-[1914px] overflow-hidden bg-[#f7f9fd] text-[#343741]`}>
      <main className="relative flex w-[1900px] flex-col overflow-hidden">
        <div className="flex h-2 shrink-0 justify-center bg-[#25282f]">
          <span className="mr-[13px] h-px w-[596px] bg-[#6b7078]" />
        </div>
        <div className="h-px shrink-0 bg-[#d3dae6]" />
        <Header />
        <QueryBar />
        <div className="mr-[7px] ml-[2px] h-[61px] shrink-0 rounded-b-md border border-t-0 border-[#d3dae6] bg-white" />
        <div className="mt-[6px] mb-[6px] ml-[2px] flex h-[442px] shrink-0 gap-[5px]">
          <UsersPanel />
          <MapPanel />
        </div>
        <TablePanel />
        <div className="absolute top-[13px] left-[79px] z-20 h-[49px] w-[361px] border-[3px] border-[#e81c1c]" />
      </main>
      <aside className="flex w-[14px] flex-col items-center bg-[#eff1f5]">
        <div className="mt-[350px] h-[486px] w-[9px] rounded-full bg-[#a9adb8]" />
        <svg width="9" height="7" viewBox="0 0 9 7" fill="#a2a6b2" className="mt-[59px]">
          <path d="M0 0H9L4.500 7Z" />
        </svg>
      </aside>
    </div>
  );
}
